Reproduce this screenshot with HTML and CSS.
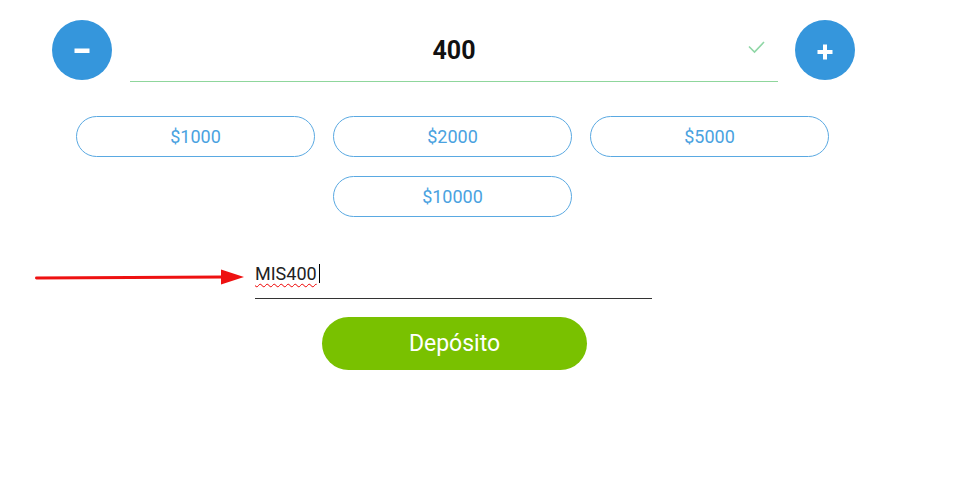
FILE: index.html
```html
<!DOCTYPE html>
<html lang="es">
<head>
<meta charset="utf-8">
<title>Depósito</title>
<link rel="stylesheet" href="styles.css">
</head>
<body>
<main class="deposit">
  <div class="amount-row">
    <button class="round-btn" aria-label="menos">
      <svg width="60" height="60" viewBox="0 0 60 60"><rect x="22.5" y="28.5" width="15" height="4.5" fill="#fff"/></svg>
    </button>
    <div class="amount-field">
      <span class="amount-value">400</span>
      <svg class="check" width="17" height="14" viewBox="0 0 17 14"><path d="M1 6.5 L6.5 12 L16 2" fill="none" stroke="#8fd7a6" stroke-width="1.6"/></svg>
    </div>
    <button class="round-btn" aria-label="más">
      <svg width="60" height="60" viewBox="0 0 60 60"><rect x="22.5" y="30" width="15" height="4" fill="#fff"/><rect x="28" y="24.5" width="4" height="15" fill="#fff"/></svg>
    </button>
  </div>

  <div class="presets">
    <button class="preset">$1000</button>
    <button class="preset">$2000</button>
    <button class="preset">$5000</button>
    <button class="preset">$10000</button>
  </div>

  <div class="code-row">
    <svg class="arrow" width="210" height="20" viewBox="0 0 210 20"><line x1="1.5" y1="10" x2="188" y2="9" stroke="#ee1111" stroke-width="3" stroke-linecap="round"/><polygon points="186,1.5 209,9 186,16.5" fill="#ee1111"/></svg>
    <div class="code-field"><span class="code-text">MIS400</span><span class="caret"></span></div>
  </div>

  <div class="submit-row">
    <button class="submit">Depósito</button>
  </div>
</main>
</body>
</html>
```

FILE: styles.css
```css
* { box-sizing: border-box; }
html, body { margin: 0; padding: 0; background: #fff; }
body { font-family: Roboto, "Noto Sans", Arial, sans-serif; width: 975px; height: 498px; overflow: hidden; }

.deposit { padding-top: 20px; }

.amount-row {
  display: flex;
  align-items: flex-start;
  padding-left: 52px;
}
.round-btn {
  width: 60px;
  height: 60px;
  padding: 0;
  border: none;
  border-radius: 50%;
  background: #3596dc;
  display: flex;
  flex-shrink: 0;
}
.round-btn svg { display: block; }

.amount-field {
  position: relative;
  width: 648px;
  height: 62px;
  margin: 0 17px 0 18px;
  border-bottom: 1px solid #8fd69c;
  display: flex;
  justify-content: center;
  align-items: center;
}
.amount-value {
  font-weight: 700;
  font-size: 25px;
  color: #111;
  margin-top: -1px;
}
.check {
  position: absolute;
  left: 618px;
  top: 20px;
}

.presets {
  width: 753px;
  margin: 34px 0 0 76px;
  display: flex;
  flex-wrap: wrap;
  justify-content: center;
  column-gap: 18px;
  row-gap: 19px;
}
.preset {
  width: 239px;
  height: 41px;
  border: 1.5px solid #5aa9e2;
  border-radius: 21px;
  background: #fff;
  color: #4aa2df;
  font-family: Roboto, "Noto Sans", Arial, sans-serif;
  font-size: 18px;
  padding: 0;
}

.code-row {
  position: relative;
  margin-top: 46px;
  padding-left: 255px;
}
.arrow {
  position: absolute;
  left: 35px;
  top: 5px;
}
.code-field {
  width: 397px;
  height: 36px;
  padding-bottom: 13px;
  border-bottom: 1px solid #333;
  font-size: 18px;
  line-height: 22px;
  color: #222;
  display: flex;
  align-items: flex-start;
}
.code-text {
  text-decoration: underline wavy #e00;
  text-decoration-thickness: 1px;
  text-underline-offset: 3px;
}
.caret {
  display: inline-block;
  width: 1px;
  height: 19px;
  margin: 1px 0 0 2px;
  background: #000;
}

.submit-row {
  display: flex;
  padding-left: 322px;
  margin-top: 18px;
}
.submit {
  width: 265px;
  height: 53px;
  border: none;
  border-radius: 27px;
  background: #79c100;
  color: #fff;
  font-family: Roboto, "Noto Sans", Arial, sans-serif;
  font-weight: 400;
  font-size: 23px;
  padding: 0;
}
```
